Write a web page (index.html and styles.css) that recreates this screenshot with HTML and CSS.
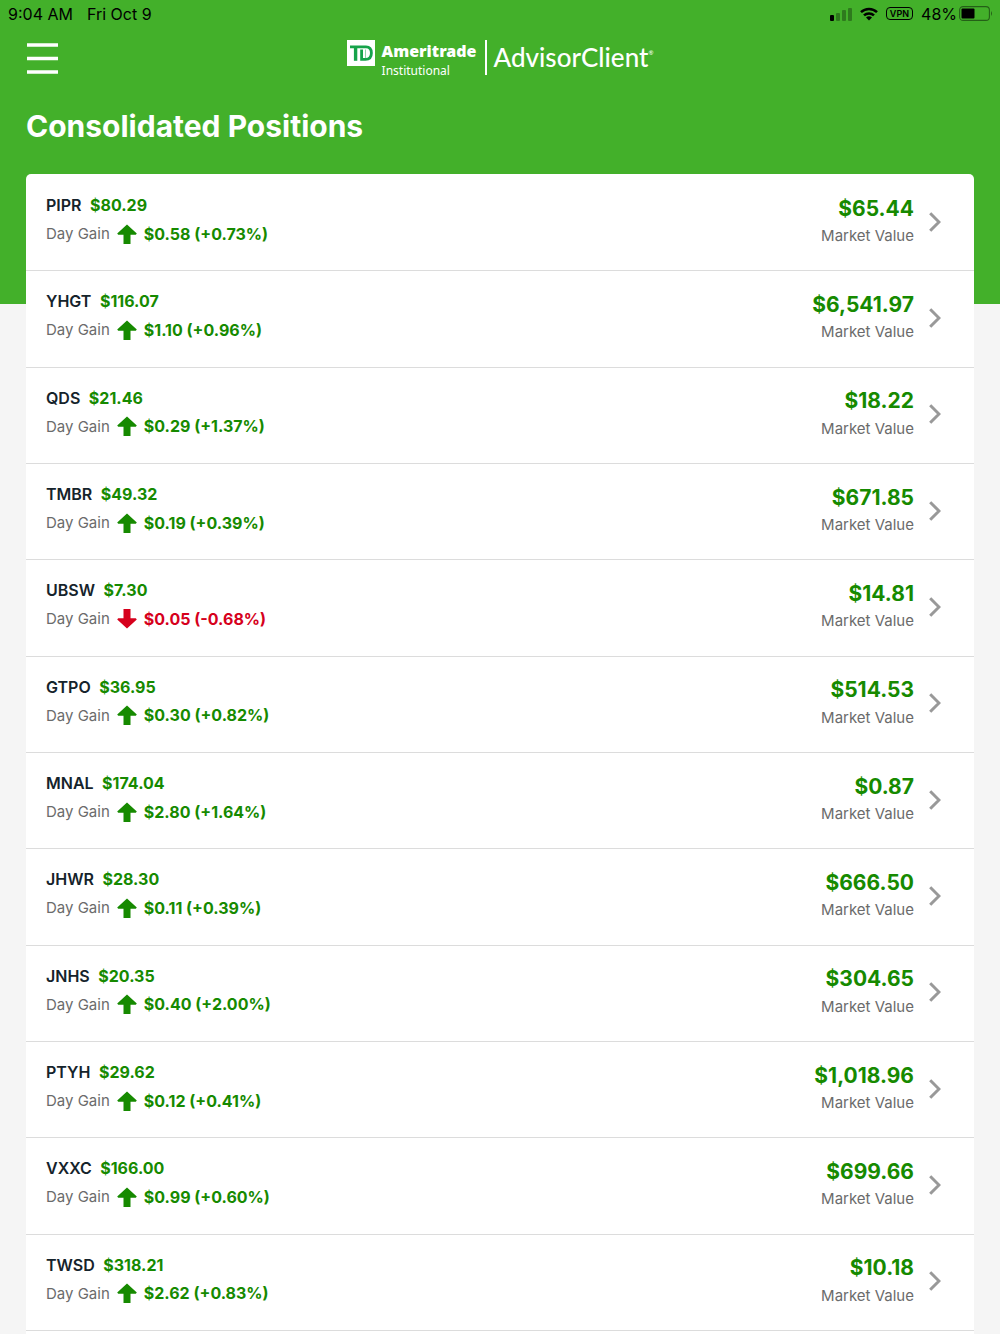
FILE: index.html
```html
<!DOCTYPE html>
<html lang="en">

<head>
    <meta charset="UTF-8">
    <meta name="viewport" content="width=device-width, initial-scale=1.0">
    <title>Consolidated Positions</title>
    <link rel="stylesheet" href="styles.css">
</head>

<body>
    <!-- Shared icons -->
    <svg class="icon-defs" aria-hidden="true">
        <symbol id="arrow" viewBox="0 0 20 20">
            <path d="M10 0.5 L19.8 9.6 L18.8 10.8 H13.5 V20 H6.5 V10.8 H1.2 L0.2 9.6 Z" fill="currentColor" />
        </symbol>
        <symbol id="chevron" viewBox="0 0 12 20">
            <path d="M1.2 1.2 L10 10 L1.2 18.8" fill="none" stroke="currentColor" stroke-width="3" />
        </symbol>
    </svg>

    <div class="status-bar">
        <span class="status-time">9:04 AM</span>
        <span>Fri Oct 9</span>
        <div class="status-icons">
            <svg width="22" height="14" viewBox="0 0 22 14" aria-hidden="true">
                <rect x="0" y="8" width="4" height="6" rx="1" />
                <g opacity="0.3">
                    <rect x="6" y="6" width="4" height="8" rx="1" />
                    <rect x="12" y="3" width="4" height="11" rx="1" />
                    <rect x="18" y="1" width="4" height="13" rx="1" />
                </g>
            </svg>
            <svg class="wifi" width="18" height="14" viewBox="0 0 18 14" aria-hidden="true">
                <g fill="none" stroke="#000" stroke-width="2.5">
                    <path d="M1 5.2 A11.4 11.4 0 0 1 17 5.2" />
                    <path d="M4 8.4 A7.2 7.2 0 0 1 14 8.4" />
                </g>
                <path d="M9 13.6 L6 10.6 A4.3 4.3 0 0 1 12 10.6 Z" />
            </svg>
            <span class="vpn">VPN</span>
            <span>48%</span>
            <svg class="battery" width="34" height="15" viewBox="0 0 34 15" aria-hidden="true">
                <rect x="0.6" y="0.6" width="29.8" height="13.8" rx="3.5" fill="none" stroke="#000" stroke-width="1.1" opacity="0.45" />
                <rect x="2.5" y="2.5" width="13" height="10" rx="1" />
                <path d="M32 5 Q34 7.5 32 10 Z" opacity="0.45" />
            </svg>
        </div>
    </div>

    <header class="topnav">
        <button type="button" class="menu-button" aria-label="Menu">
            <svg width="31" height="31" viewBox="0 0 31 31" aria-hidden="true">
                <path d="M0 2 H31 M0 15.5 H31 M0 29 H31" stroke="#fff" stroke-width="3.6" />
            </svg>
        </button>
        <a href="#" class="logo">
            <svg width="28" height="26" viewBox="0 0 28 26" aria-hidden="true">
                <rect width="28" height="26" fill="#fff" />
                <g fill="none" stroke="#16a34a" stroke-width="2.8">
                    <path d="M3 6.8 H19 Q24.4 6.8 24.4 13 Q24.4 19.4 18.5 19.4 H14.6 V9.5" />
                    <path d="M8.6 7 V20.8" stroke-width="3.4" />
                    <path d="M18.5 9.5 V18" stroke-width="1" stroke="#8fd3a8" />
                </g>
            </svg>
            <span class="logo-names">
                <strong>Ameritrade</strong>
                <span>Institutional</span>
            </span>
            <span class="logo-product">AdvisorClient<sup>®</sup></span>
        </a>
    </header>

    <h1>Consolidated Positions</h1>

    <ul class="positions">
        <li>
            <a href="#" class="position">
                <div class="quote"><b>PIPR</b> <span class="up">$80.29</span></div>
                <div class="market-amount">$65.44</div>
                <div class="gain">Day Gain <svg class="arrow up"><use href="#arrow" /></svg> <span class="up">$0.58 (+0.73%)</span></div>
                <div class="market-label">Market Value</div>
                <svg class="chevron"><use href="#chevron" /></svg>
            </a>
        </li>
        <li>
            <a href="#" class="position">
                <div class="quote"><b>YHGT</b> <span class="up">$116.07</span></div>
                <div class="market-amount">$6,541.97</div>
                <div class="gain">Day Gain <svg class="arrow up"><use href="#arrow" /></svg> <span class="up">$1.10 (+0.96%)</span></div>
                <div class="market-label">Market Value</div>
                <svg class="chevron"><use href="#chevron" /></svg>
            </a>
        </li>
        <li>
            <a href="#" class="position">
                <div class="quote"><b>QDS</b> <span class="up">$21.46</span></div>
                <div class="market-amount">$18.22</div>
                <div class="gain">Day Gain <svg class="arrow up"><use href="#arrow" /></svg> <span class="up">$0.29 (+1.37%)</span></div>
                <div class="market-label">Market Value</div>
                <svg class="chevron"><use href="#chevron" /></svg>
            </a>
        </li>
        <li>
            <a href="#" class="position">
                <div class="quote"><b>TMBR</b> <span class="up">$49.32</span></div>
                <div class="market-amount">$671.85</div>
                <div class="gain">Day Gain <svg class="arrow up"><use href="#arrow" /></svg> <span class="up">$0.19 (+0.39%)</span></div>
                <div class="market-label">Market Value</div>
                <svg class="chevron"><use href="#chevron" /></svg>
            </a>
        </li>
        <li>
            <a href="#" class="position">
                <div class="quote"><b>UBSW</b> <span class="up">$7.30</span></div>
                <div class="market-amount">$14.81</div>
                <div class="gain">Day Gain <svg class="arrow down"><use href="#arrow" /></svg> <span class="down">$0.05 (-0.68%)</span></div>
                <div class="market-label">Market Value</div>
                <svg class="chevron"><use href="#chevron" /></svg>
            </a>
        </li>
        <li>
            <a href="#" class="position">
                <div class="quote"><b>GTPO</b> <span class="up">$36.95</span></div>
                <div class="market-amount">$514.53</div>
                <div class="gain">Day Gain <svg class="arrow up"><use href="#arrow" /></svg> <span class="up">$0.30 (+0.82%)</span></div>
                <div class="market-label">Market Value</div>
                <svg class="chevron"><use href="#chevron" /></svg>
            </a>
        </li>
        <li>
            <a href="#" class="position">
                <div class="quote"><b>MNAL</b> <span class="up">$174.04</span></div>
                <div class="market-amount">$0.87</div>
                <div class="gain">Day Gain <svg class="arrow up"><use href="#arrow" /></svg> <span class="up">$2.80 (+1.64%)</span></div>
                <div class="market-label">Market Value</div>
                <svg class="chevron"><use href="#chevron" /></svg>
            </a>
        </li>
        <li>
            <a href="#" class="position">
                <div class="quote"><b>JHWR</b> <span class="up">$28.30</span></div>
                <div class="market-amount">$666.50</div>
                <div class="gain">Day Gain <svg class="arrow up"><use href="#arrow" /></svg> <span class="up">$0.11 (+0.39%)</span></div>
                <div class="market-label">Market Value</div>
                <svg class="chevron"><use href="#chevron" /></svg>
            </a>
        </li>
        <li>
            <a href="#" class="position">
                <div class="quote"><b>JNHS</b> <span class="up">$20.35</span></div>
                <div class="market-amount">$304.65</div>
                <div class="gain">Day Gain <svg class="arrow up"><use href="#arrow" /></svg> <span class="up">$0.40 (+2.00%)</span></div>
                <div class="market-label">Market Value</div>
                <svg class="chevron"><use href="#chevron" /></svg>
            </a>
        </li>
        <li>
            <a href="#" class="position">
                <div class="quote"><b>PTYH</b> <span class="up">$29.62</span></div>
                <div class="market-amount">$1,018.96</div>
                <div class="gain">Day Gain <svg class="arrow up"><use href="#arrow" /></svg> <span class="up">$0.12 (+0.41%)</span></div>
                <div class="market-label">Market Value</div>
                <svg class="chevron"><use href="#chevron" /></svg>
            </a>
        </li>
        <li>
            <a href="#" class="position">
                <div class="quote"><b>VXXC</b> <span class="up">$166.00</span></div>
                <div class="market-amount">$699.66</div>
                <div class="gain">Day Gain <svg class="arrow up"><use href="#arrow" /></svg> <span class="up">$0.99 (+0.60%)</span></div>
                <div class="market-label">Market Value</div>
                <svg class="chevron"><use href="#chevron" /></svg>
            </a>
        </li>
        <li>
            <a href="#" class="position">
                <div class="quote"><b>TWSD</b> <span class="up">$318.21</span></div>
                <div class="market-amount">$10.18</div>
                <div class="gain">Day Gain <svg class="arrow up"><use href="#arrow" /></svg> <span class="up">$2.62 (+0.83%)</span></div>
                <div class="market-label">Market Value</div>
                <svg class="chevron"><use href="#chevron" /></svg>
            </a>
        </li>
    </ul>
</body>

</html>
```
FILE: styles.css
```css
* {
    box-sizing: border-box;
}

body {
    display: flex;
    flex-direction: column;
    min-height: 100vh;
    margin: 0;
    font-family: Inter, "Liberation Sans", sans-serif;
    font-size: 16px;
    /* green band behind the header and the first rows */
    background: linear-gradient(#43b02a 304px, #f5f5f5 304px);
}

.icon-defs {
    display: none;
}

/* Status bar */
.status-bar {
    display: flex;
    align-items: center;
    height: 27px;
    padding: 0 7px 0 8px;
    color: #000;
}

.status-time {
    margin-right: 14px;
}

.status-icons {
    display: flex;
    align-items: center;
    gap: 8px;
    margin-left: auto;
}

.vpn {
    padding: 0 3px;
    border: 1px solid #000;
    border-radius: 4px;
    font-size: 9px;
    font-weight: 600;
    line-height: 11px;
}

.battery {
    margin-left: -6px;
}

/* Header */
.topnav {
    display: grid;
    grid-template-columns: 1fr auto 1fr;
    align-items: center;
    height: 63px;
    padding: 0 27px;
}

.menu-button {
    justify-self: start;
    padding: 0;
    border: none;
    background: none;
    cursor: pointer;
}

.menu-button svg {
    display: block;
}

.logo {
    display: flex;
    align-items: flex-start;
    padding-top: 2px;
    color: #fff;
    text-decoration: none;
}

.logo-names {
    display: flex;
    flex-direction: column;
    padding: 0 8px 0 7px;
    font-family: "Noto Sans", sans-serif;
    font-size: 12px;
    line-height: 18px;
}

.logo-names strong {
    font-size: 16px;
    font-weight: 900;
    line-height: 22px;
}

.logo-product {
    padding-left: 7px;
    border-left: 2px solid #fff;
    font-family: Lato, sans-serif;
    font-size: 26px;
    font-weight: 500;
    line-height: 35px;
}

.logo-product sup {
    font-size: 6px;
    line-height: 6px;
    vertical-align: 12px;
}

h1 {
    margin: 0;
    padding: 18px 26px 30px;
    color: #fff;
    font-size: 30px;
    font-weight: 700;
    line-height: 36px;
}

/* Positions */
.positions {
    flex: 1;
    display: grid;
    grid-auto-rows: 1fr;
    margin: 0 26px;
    padding: 1px 0 3px;
    list-style: none;
    background: #fff;
    border-radius: 5px 5px 0 0;
}

.positions li {
    border-bottom: 1px solid #dcdcdc;
}

.position {
    display: grid;
    grid-template-columns: 1fr auto 12px;
    grid-template-rows: 24px 33px;
    column-gap: 15px;
    align-items: center;
    padding: 18px 33px 19px 20px;
    color: #6b6b6b;
    text-decoration: none;
}

.quote b {
    margin-right: 4px;
    color: #15232b;
    font-weight: 600;
}

.up,
.down {
    font-weight: 700;
}

.up {
    color: #168a00;
}

.down {
    color: #d6001c;
}

.gain {
    display: flex;
    align-items: center;
    gap: 7px;
    font-size: 15px;
}

.gain span {
    font-size: 16px;
}

.arrow {
    width: 20px;
    height: 20px;
}

.arrow.down {
    transform: rotate(180deg);
}

.market-amount,
.market-label {
    text-align: right;
}

.market-amount {
    padding-top: 6px;
    color: #168a00;
    font-size: 21px;
    font-weight: 700;
}

.market-label {
    padding-top: 4px;
    font-size: 15px;
}

.chevron {
    grid-column: 3;
    grid-row: 1 / 3;
    width: 12px;
    height: 20px;
    color: #999;
}
```
